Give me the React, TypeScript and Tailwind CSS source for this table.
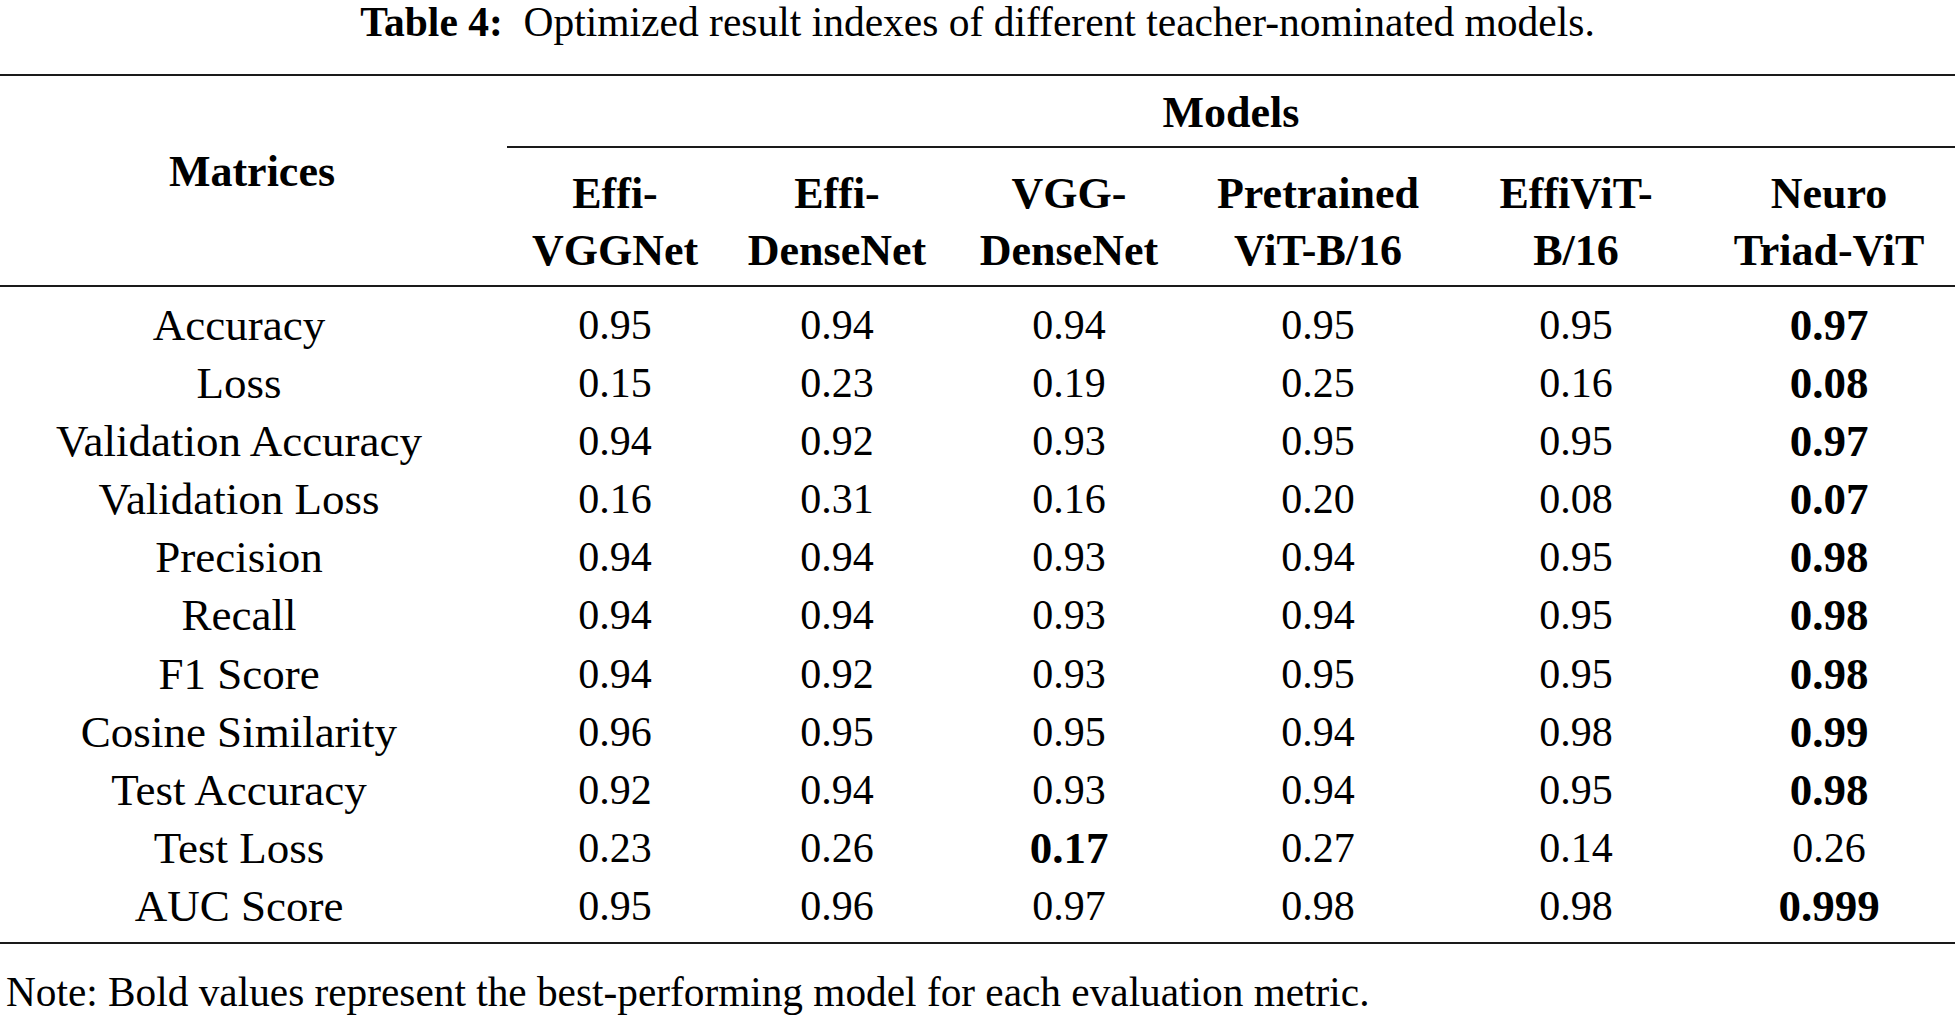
import React from "react";

const models = [
  ["Effi-", "VGGNet"],
  ["Effi-", "DenseNet"],
  ["VGG-", "DenseNet"],
  ["Pretrained", "ViT-B/16"],
  ["EffiViT-", "B/16"],
  ["Neuro", "Triad-ViT"],
];

// each value: [text, bold]
const rows: { name: string; values: [string, boolean][] }[] = [
  { name: "Accuracy", values: [["0.95", false], ["0.94", false], ["0.94", false], ["0.95", false], ["0.95", false], ["0.97", true]] },
  { name: "Loss", values: [["0.15", false], ["0.23", false], ["0.19", false], ["0.25", false], ["0.16", false], ["0.08", true]] },
  { name: "Validation Accuracy", values: [["0.94", false], ["0.92", false], ["0.93", false], ["0.95", false], ["0.95", false], ["0.97", true]] },
  { name: "Validation Loss", values: [["0.16", false], ["0.31", false], ["0.16", false], ["0.20", false], ["0.08", false], ["0.07", true]] },
  { name: "Precision", values: [["0.94", false], ["0.94", false], ["0.93", false], ["0.94", false], ["0.95", false], ["0.98", true]] },
  { name: "Recall", values: [["0.94", false], ["0.94", false], ["0.93", false], ["0.94", false], ["0.95", false], ["0.98", true]] },
  { name: "F1 Score", values: [["0.94", false], ["0.92", false], ["0.93", false], ["0.95", false], ["0.95", false], ["0.98", true]] },
  { name: "Cosine Similarity", values: [["0.96", false], ["0.95", false], ["0.95", false], ["0.94", false], ["0.98", false], ["0.99", true]] },
  { name: "Test Accuracy", values: [["0.92", false], ["0.94", false], ["0.93", false], ["0.94", false], ["0.95", false], ["0.98", true]] },
  { name: "Test Loss", values: [["0.23", false], ["0.26", false], ["0.17", true], ["0.27", false], ["0.14", false], ["0.26", false]] },
  { name: "AUC Score", values: [["0.95", false], ["0.96", false], ["0.97", false], ["0.98", false], ["0.98", false], ["0.999", true]] },
];

const cols = "grid grid-cols-[507px_216px_228px_236px_262px_254px_252px]";

export default function App() {
  return (
    <div className="w-[1955px] min-h-[1018px] bg-white text-black font-['Liberation_Serif',serif]">
      {/* Caption */}
      <p className="text-center text-[41.5px] leading-[44px]">
        <span className="font-bold">Table 4:</span>&nbsp; Optimized result indexes of different teacher-nominated models.
      </p>

      <div className="mt-[30px] h-[2px] bg-[#1a1a1a]" />

      {/* Header */}
      <div className={cols + " text-[44px] font-bold"}>
        <div className="row-span-3 pr-[3px] pt-[71px] text-center leading-[50px]">Matrices</div>
        <div className="col-span-6 pt-[12px] pb-[8px] text-center leading-[50px]">Models</div>
        <div className="col-span-6 h-[2px] bg-[#1a1a1a]" />
        {models.map((m) => (
          <div key={m[1] + m[0]} className="pt-[17px] pb-[6px] text-center leading-[57px]">
            <div>{m[0]}</div>
            <div>{m[1]}</div>
          </div>
        ))}
      </div>

      <div className="h-[2px] bg-[#1a1a1a]" />

      {/* Body */}
      <div className="pt-[9px] pb-[7px] text-[42px] leading-[58.1px]">
        {rows.map((r) => (
          <div key={r.name} className={cols}>
            <div className="pr-[29px] text-center text-[45px]">{r.name}</div>
            {r.values.map(([v, b], i) => (
              <div key={i} className={b ? "text-center text-[45px] font-bold" : "text-center"}>
                {v}
              </div>
            ))}
          </div>
        ))}
      </div>

      <div className="h-[2px] bg-[#1a1a1a]" />

      <p className="mt-[24px] pl-[6px] text-[41.3px] leading-[48px]">
        Note: Bold values represent the best-performing model for each evaluation metric.
      </p>
    </div>
  );
}
